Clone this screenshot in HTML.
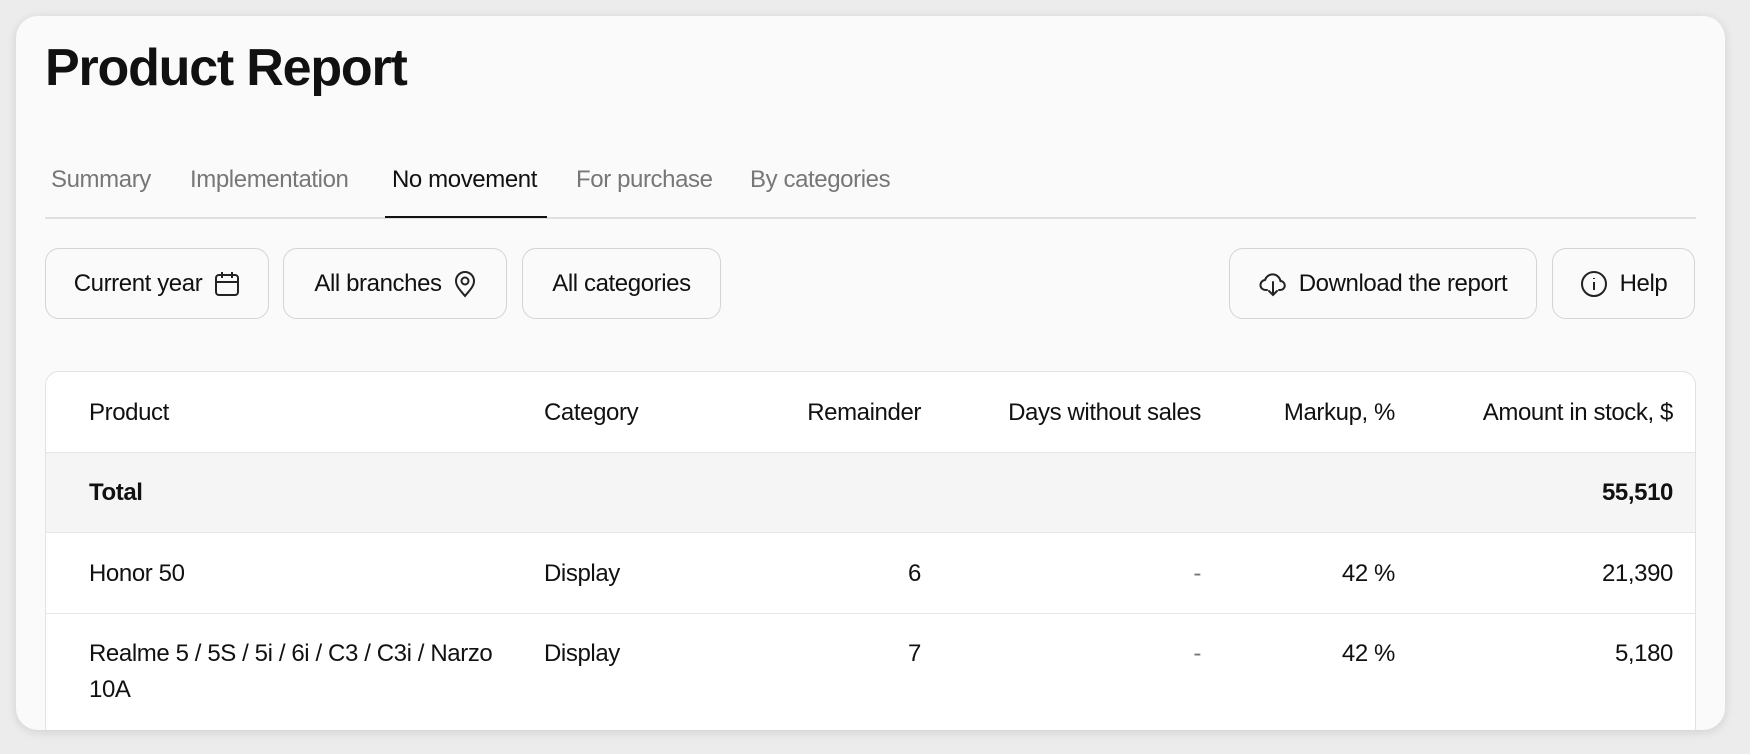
<!DOCTYPE html>
<html><head><meta charset="utf-8"><style>
*{box-sizing:border-box;margin:0;padding:0}
html,body{width:1750px;height:754px;overflow:hidden}
body{background:#ececec;font-family:"Liberation Sans",sans-serif;color:#111;position:relative}
.card{position:absolute;left:16px;top:16px;width:1709px;height:714px;background:#fafafa;border-radius:22px;box-shadow:0 2px 10px rgba(0,0,0,.12);overflow:hidden}
.abs{position:absolute}
h1{position:absolute;left:29px;top:22px;font-size:52px;font-weight:bold;letter-spacing:-1.2px}
.tab{position:absolute;top:150px;font-size:24px;color:#777;letter-spacing:-0.4px}
.btn{position:absolute;top:232px;height:71px;border:1.5px solid #d4d4d4;border-radius:14px;background:#fafafa;display:flex;align-items:center;justify-content:center;gap:12px;font-size:24px;letter-spacing:-0.4px}
.tbl{position:absolute;left:29px;top:355px;width:1651px;height:370px;border:1.5px solid #e2e2e2;border-radius:14px;background:#fff;overflow:hidden}
.row{position:absolute;left:0;width:100%;border-top:1.5px solid #e6e6e6}
.c{position:absolute;font-size:24px;letter-spacing:-0.4px;line-height:36px}
.r{text-align:right}
</style></head><body>
<div class="card">
<h1>Product Report</h1>
<div class="tab" style="left:35px">Summary</div>
<div class="tab" style="left:174px">Implementation</div>
<div class="tab" style="left:376px;color:#111">No movement</div>
<div class="tab" style="left:560px">For purchase</div>
<div class="tab" style="left:734px">By categories</div>
<div class="abs" style="left:29px;top:201px;width:1651px;height:1.5px;background:#e0e0e0"></div>
<div class="abs" style="left:369px;top:200px;width:162px;height:2px;background:#111"></div>

<div class="btn" style="left:29px;width:224px">Current year
<svg width="26" height="28" viewBox="0 0 26 28" fill="none" stroke="#222" stroke-width="2"><rect x="2" y="5" width="22" height="20" rx="3"/><path d="M2 12h22M8 2v6M18 2v6"/></svg></div>
<div class="btn" style="left:267px;width:224px">All branches
<svg width="22" height="28" viewBox="0 0 22 28" fill="none" stroke="#222" stroke-width="2"><path d="M11 26c-5-6-9-10-9-15a9 9 0 0 1 18 0c0 5-4 9-9 15z"/><circle cx="11" cy="11" r="3.5"/></svg></div>
<div class="btn" style="left:506px;width:199px">All categories</div>
<div class="btn" style="left:1213px;width:308px">
<svg width="28" height="26" viewBox="0 0 28 26" fill="none" stroke="#222" stroke-width="2" stroke-linecap="round"><path d="M8 19H7a5 5 0 0 1-1-10 8 8 0 0 1 15.5 1A4.5 4.5 0 0 1 21 19h-1"/><path d="M14 11v13M10 20l4 4 4-4"/></svg>Download the report</div>
<div class="btn" style="left:1536px;width:143px">
<svg width="28" height="28" viewBox="0 0 28 28" fill="none" stroke="#222" stroke-width="2"><circle cx="14" cy="14" r="12"/><path d="M14 12v8M14 8v1"/></svg>Help</div>

<div class="tbl">
<div class="c" style="left:43px;top:23px">Product</div>
<div class="c" style="left:498px;top:23px">Category</div>
<div class="c r" style="right:774px;top:23px">Remainder</div>
<div class="c r" style="right:494px;top:23px">Days without sales</div>
<div class="c r" style="right:300px;top:23px">Markup, %</div>
<div class="c r" style="right:22px;top:23px">Amount in stock, $</div>

<div class="row" style="top:80px;height:81px;background:#f5f5f5"></div>
<div class="c" style="left:43px;top:103px;font-weight:bold">Total</div>
<div class="c r" style="right:22px;top:103px;font-weight:bold">55,510</div>

<div class="row" style="top:160px;height:81px"></div>
<div class="c" style="left:43px;top:184px">Honor 50</div>
<div class="c" style="left:498px;top:184px">Display</div>
<div class="c r" style="right:774px;top:184px">6</div>
<div class="c r" style="right:494px;top:184px;color:#777">-</div>
<div class="c r" style="right:300px;top:184px">42 %</div>
<div class="c r" style="right:22px;top:184px">21,390</div>

<div class="row" style="top:241px;height:129px"></div>
<div class="c" style="left:43px;top:264px">Realme 5 / 5S / 5i / 6i / C3 / C3i / Narzo<br>10A</div>
<div class="c" style="left:498px;top:264px">Display</div>
<div class="c r" style="right:774px;top:264px">7</div>
<div class="c r" style="right:494px;top:264px;color:#777">-</div>
<div class="c r" style="right:300px;top:264px">42 %</div>
<div class="c r" style="right:22px;top:264px">5,180</div>
</div>
</div>
</body></html>
